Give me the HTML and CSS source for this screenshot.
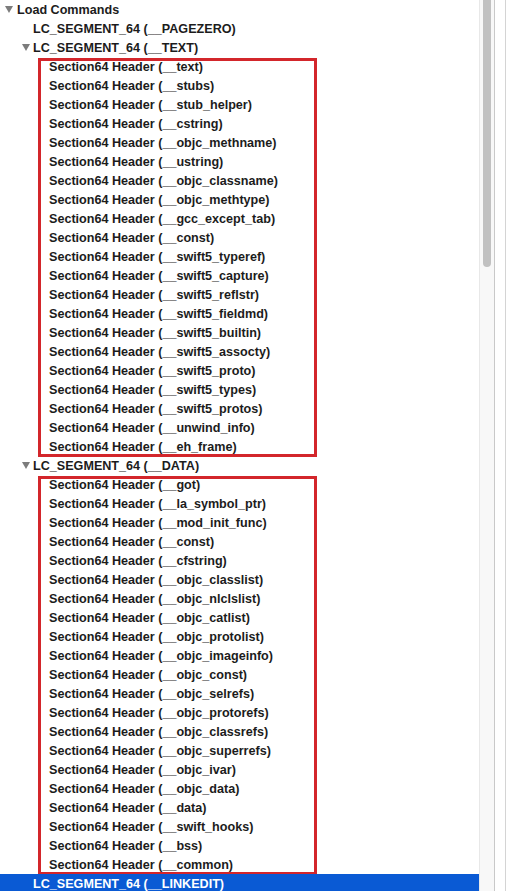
FILE: index.html
```html
<!DOCTYPE html>
<html>
<head>
<meta charset="utf-8">
<link rel="stylesheet" href="styles.css">
</head>
<body>
<div class="window">
  <div class="tree">
    <div class="row lvl0"><span class="tri"></span><span class="label">Load Commands</span></div>
    <div class="row lvl1"><span class="label">LC_SEGMENT_64 (__PAGEZERO)</span></div>
    <div class="row lvl1"><span class="tri"></span><span class="label">LC_SEGMENT_64 (__TEXT)</span></div>
    <div class="group">
      <div class="row lvl2"><span class="label">Section64 Header (__text)</span></div>
      <div class="row lvl2"><span class="label">Section64 Header (__stubs)</span></div>
      <div class="row lvl2"><span class="label">Section64 Header (__stub_helper)</span></div>
      <div class="row lvl2"><span class="label">Section64 Header (__cstring)</span></div>
      <div class="row lvl2"><span class="label">Section64 Header (__objc_methname)</span></div>
      <div class="row lvl2"><span class="label">Section64 Header (__ustring)</span></div>
      <div class="row lvl2"><span class="label">Section64 Header (__objc_classname)</span></div>
      <div class="row lvl2"><span class="label">Section64 Header (__objc_methtype)</span></div>
      <div class="row lvl2"><span class="label">Section64 Header (__gcc_except_tab)</span></div>
      <div class="row lvl2"><span class="label">Section64 Header (__const)</span></div>
      <div class="row lvl2"><span class="label">Section64 Header (__swift5_typeref)</span></div>
      <div class="row lvl2"><span class="label">Section64 Header (__swift5_capture)</span></div>
      <div class="row lvl2"><span class="label">Section64 Header (__swift5_reflstr)</span></div>
      <div class="row lvl2"><span class="label">Section64 Header (__swift5_fieldmd)</span></div>
      <div class="row lvl2"><span class="label">Section64 Header (__swift5_builtin)</span></div>
      <div class="row lvl2"><span class="label">Section64 Header (__swift5_assocty)</span></div>
      <div class="row lvl2"><span class="label">Section64 Header (__swift5_proto)</span></div>
      <div class="row lvl2"><span class="label">Section64 Header (__swift5_types)</span></div>
      <div class="row lvl2"><span class="label">Section64 Header (__swift5_protos)</span></div>
      <div class="row lvl2"><span class="label">Section64 Header (__unwind_info)</span></div>
      <div class="row lvl2"><span class="label">Section64 Header (__eh_frame)</span></div>
    </div>
    <div class="row lvl1"><span class="tri"></span><span class="label">LC_SEGMENT_64 (__DATA)</span></div>
    <div class="group">
      <div class="row lvl2"><span class="label">Section64 Header (__got)</span></div>
      <div class="row lvl2"><span class="label">Section64 Header (__la_symbol_ptr)</span></div>
      <div class="row lvl2"><span class="label">Section64 Header (__mod_init_func)</span></div>
      <div class="row lvl2"><span class="label">Section64 Header (__const)</span></div>
      <div class="row lvl2"><span class="label">Section64 Header (__cfstring)</span></div>
      <div class="row lvl2"><span class="label">Section64 Header (__objc_classlist)</span></div>
      <div class="row lvl2"><span class="label">Section64 Header (__objc_nlclslist)</span></div>
      <div class="row lvl2"><span class="label">Section64 Header (__objc_catlist)</span></div>
      <div class="row lvl2"><span class="label">Section64 Header (__objc_protolist)</span></div>
      <div class="row lvl2"><span class="label">Section64 Header (__objc_imageinfo)</span></div>
      <div class="row lvl2"><span class="label">Section64 Header (__objc_const)</span></div>
      <div class="row lvl2"><span class="label">Section64 Header (__objc_selrefs)</span></div>
      <div class="row lvl2"><span class="label">Section64 Header (__objc_protorefs)</span></div>
      <div class="row lvl2"><span class="label">Section64 Header (__objc_classrefs)</span></div>
      <div class="row lvl2"><span class="label">Section64 Header (__objc_superrefs)</span></div>
      <div class="row lvl2"><span class="label">Section64 Header (__objc_ivar)</span></div>
      <div class="row lvl2"><span class="label">Section64 Header (__objc_data)</span></div>
      <div class="row lvl2"><span class="label">Section64 Header (__data)</span></div>
      <div class="row lvl2"><span class="label">Section64 Header (__swift_hooks)</span></div>
      <div class="row lvl2"><span class="label">Section64 Header (__bss)</span></div>
      <div class="row lvl2"><span class="label">Section64 Header (__common)</span></div>
    </div>
    <div class="row lvl1 selected"><span class="label">LC_SEGMENT_64 (__LINKEDIT)</span></div>
  </div>
  <div class="scrollbar"><div class="thumb"></div></div>
  <div class="edge"><div class="edge-line"></div></div>
</div>
</body>
</html>
```

FILE: styles.css
```css
html, body {
  margin: 0;
  padding: 0;
  background: #ffffff;
  overflow: hidden;
}

.window {
  display: flex;
  width: 507px;
  height: 891px;
  overflow: hidden;
}

.tree {
  width: 479px;
  flex: none;
  font-family: "Liberation Sans", Arial, sans-serif;
  font-weight: bold;
  font-size: 12.6px;
  color: #1c1c1c;
}

.row {
  height: 19px;
  display: flex;
  align-items: center;
  white-space: nowrap;
  position: relative;
}

.lvl0 { padding-left: 17px; }
.lvl1 { padding-left: 33px; }
.lvl2 { padding-left: 49px; }

.tri {
  position: absolute;
  top: 6px;
  width: 0;
  height: 0;
  border-left: 4px solid transparent;
  border-right: 4px solid transparent;
  border-top: 7px solid #7c7c7c;
}
.lvl0 .tri { left: 5px; }
.lvl1 .tri { left: 22px; }

.group {
  position: relative;
}
.group::after {
  content: "";
  position: absolute;
  top: 1px;
  bottom: -1px;
  left: 38px;
  width: 273px;
  border: 3px solid #d3262b;
  pointer-events: none;
}

.selected {
  background: #0a5ad4;
  color: #ffffff;
}

.scrollbar {
  width: 14px;
  flex: none;
  background: #f8f8f8;
  border-left: 1px solid #e8e8e8;
  border-right: 1px solid #c9c9c9;
  position: relative;
}
.thumb {
  position: absolute;
  left: 3px;
  top: -6px;
  width: 8px;
  height: 273px;
  border-radius: 4px;
  background: #c1c1c1;
}

.edge {
  flex: 1;
  display: flex;
  padding-left: 10px;
}
.edge-line {
  width: 1px;
  background: #d4d4d4;
}
```
